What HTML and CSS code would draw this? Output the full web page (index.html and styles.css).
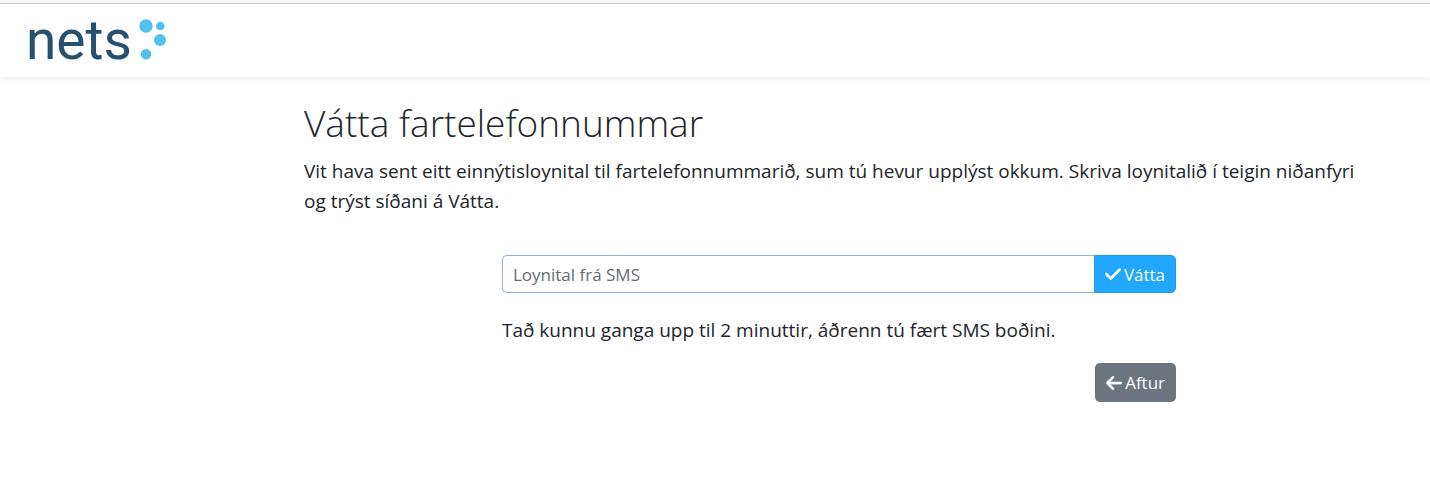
FILE: index.html
```html
<!DOCTYPE html>
<html lang="fo">
<head>
    <meta charset="UTF-8">
    <meta name="viewport" content="width=device-width, initial-scale=1.0">
    <title>Vátta fartelefonnummar</title>
    <link rel="stylesheet" href="styles.css">
</head>
<body>
    <header class="topbar">
        <a class="logo" href="#" aria-label="nets">
            <span class="logo-text">nets</span>
            <svg class="logo-dots" width="28" height="42" viewBox="0 0 28 42" fill="#51c0ef" aria-hidden="true">
                <circle cx="7" cy="7" r="6.7"/>
                <circle cx="21.3" cy="7" r="4.3"/>
                <circle cx="21" cy="21" r="6"/>
                <circle cx="7" cy="35.3" r="5.2"/>
            </svg>
        </a>
    </header>

    <main class="content">
        <h1>Vátta fartelefonnummar</h1>
        <p class="lead">Vit hava sent eitt einnýtisloynital til fartelefonnummarið, sum tú hevur upplýst okkum. Skriva loynitalið í teigin niðanfyri og trýst síðani á Vátta.</p>

        <form class="verify-form">
            <div class="input-group">
                <input type="text" class="code-input" id="code" placeholder="Loynital frá SMS" aria-label="Loynital frá SMS">
                <button type="submit" class="btn btn-primary">
                    <svg width="16" height="18" viewBox="0 0 448 512" fill="currentColor" aria-hidden="true"><path d="M438.600 105.400c12.500 12.500 12.500 32.800 0 45.300l-256 256c-12.500 12.500-32.800 12.500-45.300 0l-128-128c-12.500-12.500-12.500-32.800 0-45.300s32.800-12.500 45.300 0L160 338.700 393.400 105.400c12.500-12.500 32.800-12.500 45.300 0z" stroke="currentColor" stroke-width="16"/></svg>
                    Vátta
                </button>
            </div>
            <p class="hint">Tað kunnu ganga upp til 2 minuttir, áðrenn tú fært SMS boðini.</p>
            <button type="button" class="btn btn-secondary">
                <svg width="16" height="18" viewBox="0 0 448 512" fill="currentColor" aria-hidden="true"><path d="M9.400 233.400c-12.500 12.500-12.500 32.800 0 45.300l160 160c12.500 12.500 32.800 12.500 45.300 0s12.500-32.800 0-45.300L109.200 288 416 288c17.700 0 32-14.300 32-32s-14.300-32-32-32l-306.700 0L214.600 118.600c12.500-12.500 12.500-32.800 0-45.300s-32.800-12.500-45.300 0l-160 160z" stroke="currentColor" stroke-width="12"/></svg>
                Aftur
            </button>
        </form>
    </main>
</body>
</html>
```
FILE: styles.css
```css
* {
    box-sizing: border-box;
}

body {
    margin: 0;
    background: #fff;
    color: #212529;
    font-family: "Open Sans", "Noto Sans", sans-serif;
    font-size: 19px;
    line-height: 30px;
}

.topbar {
    height: 77px;
    padding: 16px 26px 0;
    border-top: 3px solid #f8f8f8;
    box-shadow: inset 0 1px #c8c8c8, 0 2px 5px rgba(0, 0, 0, 0.08);
}

.logo {
    display: inline-flex;
    gap: 7px;
    color: #25506f;
    text-decoration: none;
}

.logo-text {
    font-family: Roboto, sans-serif;
    font-size: 55px;
    line-height: 42px;
}

.content {
    padding: 22px 56px 0 304px;
}

h1 {
    margin: 0 0 9px;
    font-size: 37px;
    font-weight: 300;
    line-height: 48px;
}

p {
    margin: 0;
}

.verify-form {
    display: flex;
    flex-direction: column;
    width: 63%;
    margin: 39px auto 0;
}

.input-group {
    display: flex;
}

.code-input {
    flex: 1;
    min-width: 0;
    height: 38px;
    padding: 0 10px;
    border: 1px solid #8fb4dc;
    border-right: 0;
    border-radius: 5px 0 0 5px;
    color: #212529;
    font-family: inherit;
    font-size: 17px;
}

.code-input::placeholder {
    color: #666b70;
    opacity: 1;
}

.btn {
    display: flex;
    align-items: center;
    justify-content: center;
    gap: 3px;
    height: 38px;
    padding: 0 10px;
    border: 1px solid transparent;
    border-radius: 5px;
    color: #fff;
    font-family: inherit;
    font-size: 17px;
    cursor: pointer;
}

.btn-primary {
    border-color: #1c9cf0;
    border-radius: 0 5px 5px 0;
    background: #22a7ff;
}

.btn-secondary {
    align-self: flex-end;
    height: 39px;
    background: #6c757d;
}

.hint {
    margin: 22px 0 18px;
}
```
